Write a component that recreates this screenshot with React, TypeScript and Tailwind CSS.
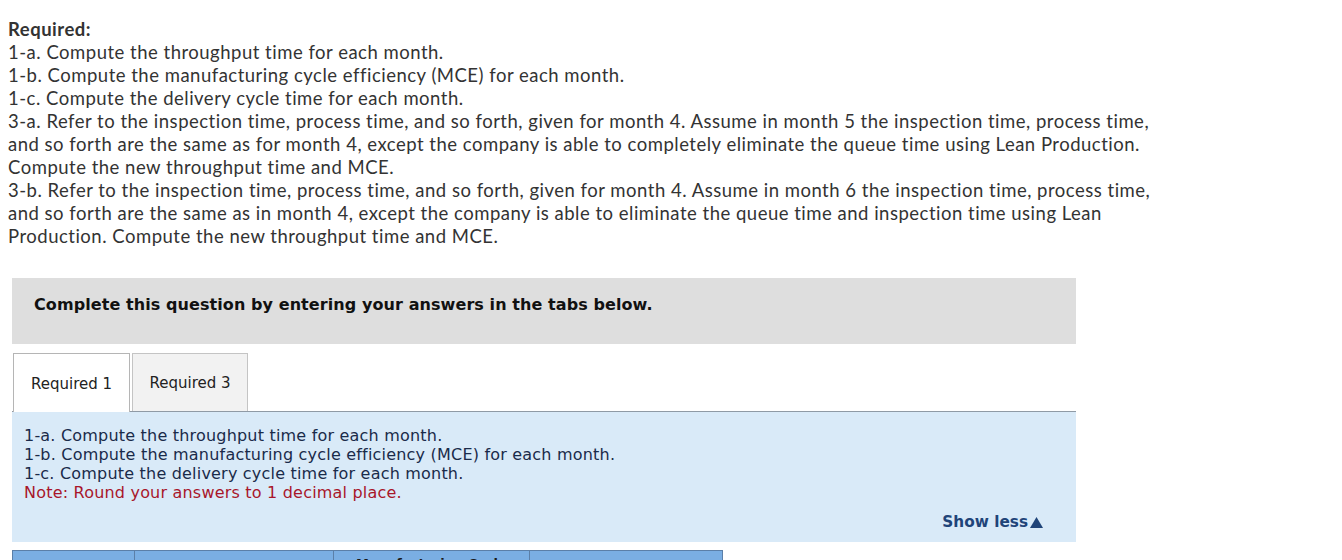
import React from "react";

export default function App() {
  return (
    <div className="w-[1342px] h-[560px] overflow-hidden bg-white relative">
      <div className="pt-[18px] pl-[8px] w-[1172px] text-[18.5px] leading-[23px] text-[#333333] font-['Lato',sans-serif] tracking-[0.5px]">
        <div className="font-bold">Required:</div>
        <div>1-a. Compute the throughput time for each month.</div>
        <div>1-b. Compute the manufacturing cycle efficiency (MCE) for each month.</div>
        <div>1-c. Compute the delivery cycle time for each month.</div>
        <div>
          3-a. Refer to the inspection time, process time, and so forth, given for month 4. Assume in month 5 the inspection time, process time, and so forth are the same as for month 4, except the company is able to completely eliminate the queue time using Lean Production. Compute the new throughput time and MCE.
        </div>
        <div>
          3-b. Refer to the inspection time, process time, and so forth, given for month 4. Assume in month 6 the inspection time, process time, and so forth are the same as in month 4, except the company is able to eliminate the queue time and inspection time using Lean Production. Compute the new throughput time and MCE.
        </div>
      </div>

      <div className="ml-[12px] mt-[30px] w-[1064px] font-['DejaVu_Sans',Verdana,sans-serif]">
        <div className="h-[66px] bg-[#dedede] pt-[17px] pl-[22px] text-[16px] leading-[20px] tracking-[0.08px] font-bold text-[#111]">
          Complete this question by entering your answers in the tabs below.
        </div>

        <div className="mt-[9px] flex items-end border-b border-[#8f9aa5] text-[15px] text-[#222]">
          <div className="ml-[1px] w-[117px] h-[59px] -mb-px bg-white border border-b-0 border-[#b5b5b5] flex items-center justify-center pt-[2px]">
            Required 1
          </div>
          <div className="ml-[2px] w-[116px] h-[58px] bg-[#f2f2f2] border border-b-0 border-[#c4c4c4] flex items-center justify-center pt-[2px]">
            Required 3
          </div>
        </div>

        <div className="h-[130px] bg-[#d9eaf8] px-[12px] pt-[14px] text-[16px] leading-[19px] tracking-[0.2px] text-[#1a2b4a] relative">
          <div>1-a. Compute the throughput time for each month.</div>
          <div>1-b. Compute the manufacturing cycle efficiency (MCE) for each month.</div>
          <div>1-c. Compute the delivery cycle time for each month.</div>
          <div className="text-[#a8162a]">Note: Round your answers to 1 decimal place.</div>
          <div className="absolute right-[33px] bottom-[10px] text-[15.3px] tracking-normal font-bold text-[#1f4479] flex items-center">
            Show less
            <svg width="13" height="11" viewBox="0 0 13 11" className="ml-[2px]">
              <polygon points="6.5,0 13,11 0,11" fill="#1f4479" />
            </svg>
          </div>
        </div>

        <div className="mt-[8px] w-[711px] h-[20px] bg-[#7aaee3] border border-[#5b7fa8] flex text-[13px] font-bold text-[#1a1a1a]">
          <div className="w-[122px] border-r border-[#5b7fa8]"></div>
          <div className="w-[199px] border-r border-[#5b7fa8]"></div>
          <div className="w-[196px] border-r border-[#5b7fa8] pt-[3px] text-center">Manufacturing Cycle</div>
          <div className="flex-1"></div>
        </div>
      </div>
    </div>
  );
}
